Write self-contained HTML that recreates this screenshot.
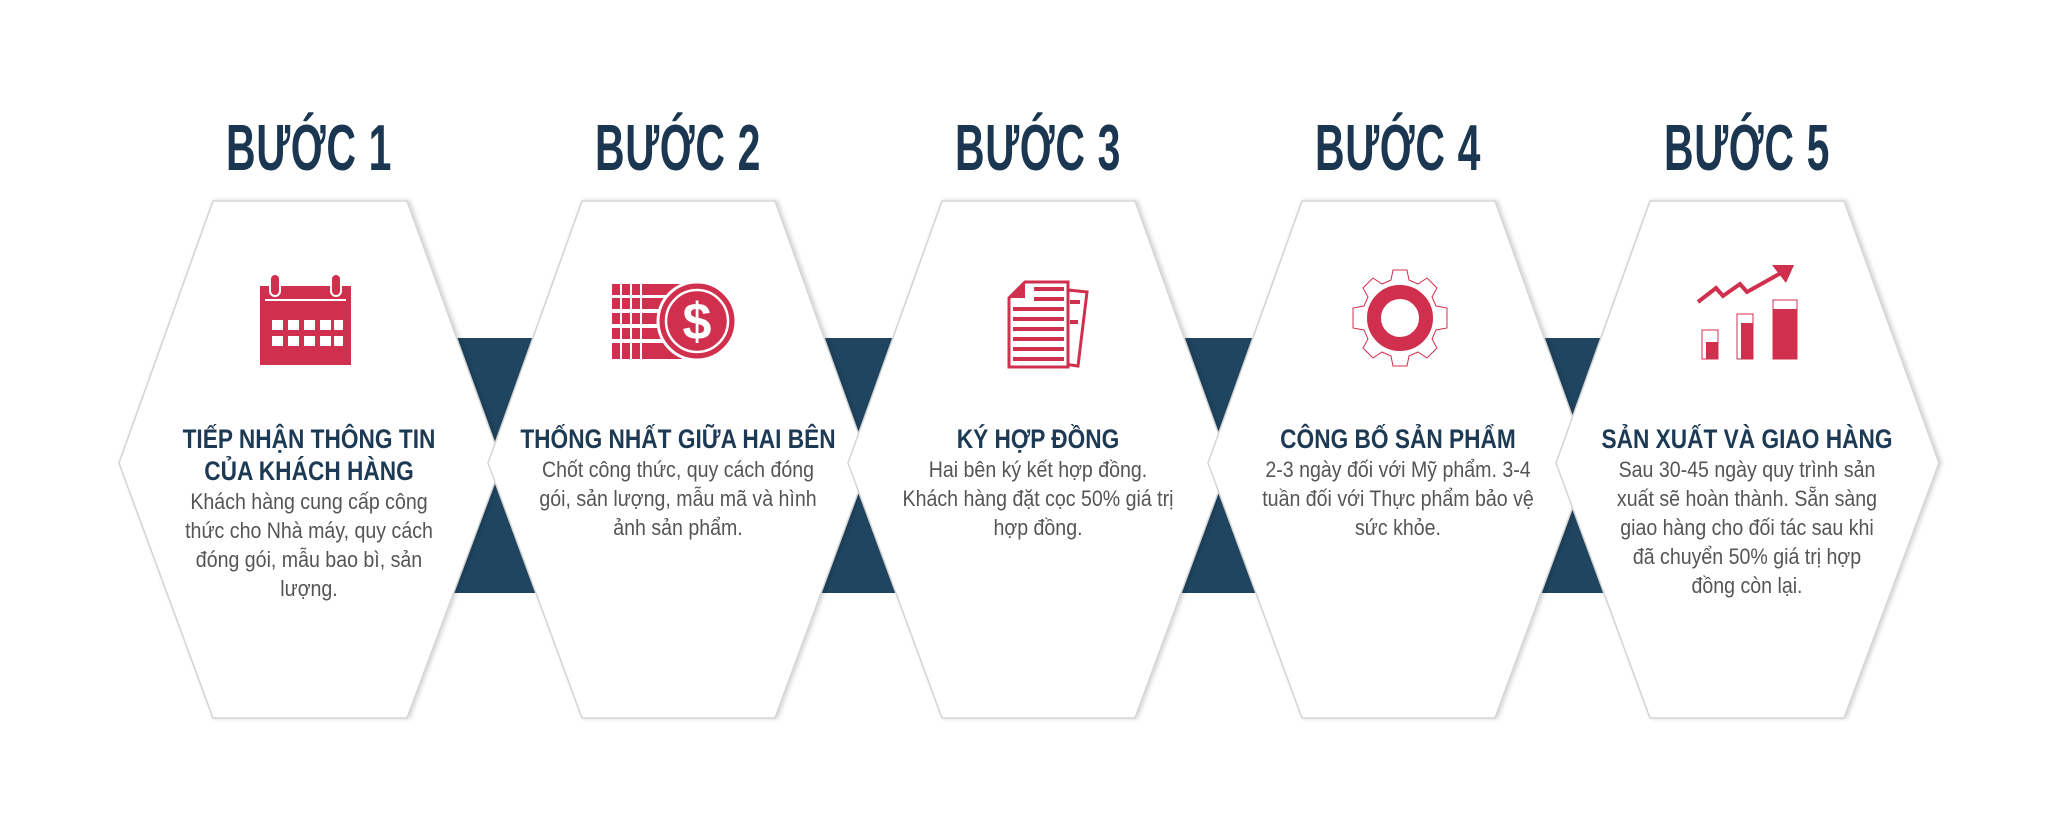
<!DOCTYPE html>
<html><head><meta charset="utf-8"><style>
html,body{margin:0;padding:0;background:#fff;}
body{width:2048px;height:813px;position:relative;overflow:hidden;font-family:"Liberation Sans Narrow","Liberation Sans",sans-serif;}
.h{position:absolute;top:110px;width:400px;text-align:center;font-weight:bold;font-size:65px;color:#1b3650;transform:scaleX(0.63);letter-spacing:1px;line-height:76px;}
.t{position:absolute;width:400px;text-align:center;font-weight:bold;font-size:27px;line-height:32px;color:#1d3a55;transform:scaleX(0.84);}
.b{position:absolute;width:400px;white-space:nowrap;text-align:center;font-size:22.5px;line-height:29px;color:#555;transform:scaleX(0.87);}
</style></head><body>
<svg width="2048" height="813" style="position:absolute;left:0;top:0">
<defs><filter id="sh" x="-10%" y="-10%" width="120%" height="120%"><feDropShadow dx="2" dy="0" stdDeviation="2" flood-color="#000" flood-opacity="0.18"/></filter></defs>
<g fill="#1f4560">
<rect x="440" y="338" width="160" height="255"/>
<rect x="808" y="338" width="160" height="255"/>
<rect x="1168" y="338" width="160" height="255"/>
<rect x="1516" y="338" width="160" height="255"/>
</g>
<g fill="#fff" stroke="#d4d4d4" stroke-width="1.5" filter="url(#sh)">
<polygon points="213,201 407,201 502,463 407,718 213,718 119,463"/>
<polygon points="582,201 775,201 869,463 775,718 582,718 488,463"/>
<polygon points="942,201 1135,201 1229,463 1135,718 942,718 848,463"/>
<polygon points="1302,201 1495,201 1589,463 1495,718 1302,718 1208,463"/>
<polygon points="1650,201 1844,201 1939,463 1844,718 1650,718 1556,463"/>
</g>
<g fill="#d0304e">
<rect x="260" y="286" width="91" height="79"/>
<rect x="270" y="274" width="10" height="22" rx="5" stroke="#fff" stroke-width="2"/>
<rect x="331" y="274" width="10" height="22" rx="5" stroke="#fff" stroke-width="2"/>
</g>
<g fill="#fff">
<rect x="265" y="299" width="81" height="2"/>
<rect x="272" y="320" width="11" height="10"/><rect x="288" y="320" width="11" height="10"/><rect x="304" y="320" width="11" height="10"/><rect x="320" y="320" width="11" height="10"/><rect x="334" y="320" width="9" height="10"/>
<rect x="272" y="336" width="11" height="10"/><rect x="288" y="336" width="11" height="10"/><rect x="304" y="336" width="11" height="10"/><rect x="320" y="336" width="11" height="10"/><rect x="334" y="336" width="9" height="10"/>
</g>
<g fill="#d0304e">
<rect x="612" y="284" width="70" height="11"/><rect x="612" y="298" width="70" height="11"/><rect x="612" y="313" width="70" height="11"/><rect x="612" y="328" width="70" height="11"/><rect x="612" y="343" width="70" height="11"/>
<rect x="612" y="349" width="70" height="10"/>
</g>
<g fill="#fff"><rect x="620" y="284" width="2" height="76"/><rect x="630" y="284" width="2" height="76"/><rect x="640" y="284" width="2" height="76"/></g>
<circle cx="697" cy="321" r="39" fill="#d0304e" stroke="#fff" stroke-width="3"/>
<circle cx="697" cy="321" r="31" fill="none" stroke="#fff" stroke-width="2.5"/>
<text x="697" y="339" text-anchor="middle" font-family="Liberation Sans" font-weight="bold" font-size="52" fill="#fff">$</text>
<polygon points="1030,286 1087,292 1078,366 1050,362" fill="#fff" stroke="#d0304e" stroke-width="3"/>
<path d="M1025,282 L1068,282 L1068,367 L1009,367 L1009,298 Z" fill="#fff" stroke="#d0304e" stroke-width="3"/>
<path d="M1009,298 L1025,282 L1025,298 Z" fill="#d0304e"/>
<g fill="#d0304e"><rect x="1034" y="287" width="30" height="4"/><rect x="1034" y="297" width="30" height="4"/><rect x="1013" y="307" width="51" height="4"/><rect x="1013" y="317" width="51" height="4"/><rect x="1013" y="327" width="51" height="4"/><rect x="1013" y="337" width="51" height="4"/><rect x="1013" y="347" width="51" height="4"/><rect x="1013" y="357" width="51" height="4"/><rect x="1070" y="300" width="10" height="4"/><rect x="1070" y="320" width="8" height="4"/></g>
<g transform="translate(1400,318)">
<path fill="#fff" stroke="#d0304e" stroke-width="1" d="M-7,-48 L7,-48 L9,-38 L18,-34 L27,-40 L37,-30 L32,-21 L36,-12 L47,-10 L47,10 L36,12 L32,21 L37,30 L27,40 L18,34 L9,38 L7,48 L-7,48 L-9,38 L-18,34 L-27,40 L-37,30 L-32,21 L-36,12 L-47,10 L-47,-10 L-36,-12 L-32,-21 L-37,-30 L-27,-40 L-18,-34 L-9,-38 Z"/>
<circle r="26" fill="none" stroke="#d0304e" stroke-width="14"/>
</g>
<g>
<rect x="1702" y="330" width="16" height="29" fill="#fff" stroke="#d0304e" stroke-width="1"/><rect x="1706" y="342" width="12" height="17" fill="#d0304e"/>
<rect x="1737" y="314" width="16" height="45" fill="#fff" stroke="#d0304e" stroke-width="1"/><rect x="1741" y="323" width="12" height="36" fill="#d0304e"/>
<rect x="1773" y="300" width="24" height="59" fill="#fff" stroke="#d0304e" stroke-width="1"/><rect x="1773" y="309" width="24" height="50" fill="#d0304e"/>
<polyline points="1698,302 1716,288 1723,296 1740,284 1747,292 1788,269" fill="none" stroke="#d0304e" stroke-width="4"/>
<polygon points="1794,265 1772,265 1786,283" fill="#d0304e"/>
</g>
</svg>
<div class="h" style="left:109px">BƯỚC 1</div>
<div class="h" style="left:478px">BƯỚC 2</div>
<div class="h" style="left:838px">BƯỚC 3</div>
<div class="h" style="left:1198px">BƯỚC 4</div>
<div class="h" style="left:1547px">BƯỚC 5</div>

<div class="t" style="left:109px;top:423px">TIẾP NHẬN THÔNG TIN<br>CỦA KHÁCH HÀNG</div>
<div class="b" style="left:109px;top:487px">Khách hàng cung cấp công<br>thức cho Nhà máy, quy cách<br>đóng gói, mẫu bao bì, sản<br>lượng.</div>

<div class="t" style="left:478px;top:423px">THỐNG NHẤT GIỮA HAI BÊN</div>
<div class="b" style="left:478px;top:455px">Chốt công thức, quy cách đóng<br>gói, sản lượng, mẫu mã và hình<br>ảnh sản phẩm.</div>

<div class="t" style="left:838px;top:423px">KÝ HỢP ĐỒNG</div>
<div class="b" style="left:838px;top:455px">Hai bên ký kết hợp đồng.<br>Khách hàng đặt cọc 50% giá trị<br>hợp đồng.</div>

<div class="t" style="left:1198px;top:423px">CÔNG BỐ SẢN PHẨM</div>
<div class="b" style="left:1198px;top:455px">2-3 ngày đối với Mỹ phẩm. 3-4<br>tuần đối với Thực phẩm bảo vệ<br>sức khỏe.</div>

<div class="t" style="left:1547px;top:423px">SẢN XUẤT VÀ GIAO HÀNG</div>
<div class="b" style="left:1547px;top:455px">Sau 30-45 ngày quy trình sản<br>xuất sẽ hoàn thành. Sẵn sàng<br>giao hàng cho đối tác sau khi<br>đã chuyển 50% giá trị hợp<br>đồng còn lại.</div>
</body></html>
